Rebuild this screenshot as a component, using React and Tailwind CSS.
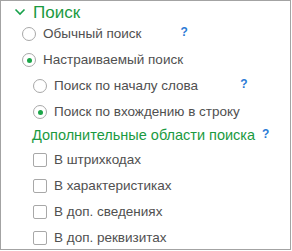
import React, { useState } from "react";

const Help = ({ className = "" }) => (
  <span className={`text-[#2b7bd6] text-[12px] font-bold leading-none ${className}`}>?</span>
);

const Radio = ({ checked }) => (
  <span className="w-[14px] h-[14px] rounded-full border border-[#a8a8a8] bg-white flex items-center justify-center shrink-0">
    {checked && <span className="w-[5px] h-[5px] rounded-full bg-[#1ba548]" />}
  </span>
);

const Box = () => (
  <span className="w-[14px] h-[14px] rounded-[2px] border border-[#a8a8a8] bg-white shrink-0" />
);

const App = () => {
  const [mode, setMode] = useState("custom");
  const [sub, setSub] = useState("contains");

  return (
    <div
      className="w-[291px] h-[250px] border border-[#a3a3a3] bg-white text-[#505050] text-[13.5px]"
      style={{ fontFamily: '"Liberation Sans", Arial, sans-serif' }}
    >
      <div className="flex items-center h-[20px] pl-[13px] pt-[2px]">
        <svg width="12" height="8" viewBox="0 0 12 8" className="mr-[7px]">
          <path d="M1.5 1.5 L6 6 L10.5 1.5" fill="none" stroke="#17a14a" strokeWidth="1.6" />
        </svg>
        <span className="text-[#1b9a3f] text-[17px] leading-none">Поиск</span>
      </div>

      <div className="flex flex-col">
        <div className="flex items-center h-[26px] pl-[21px]" onClick={() => setMode("simple")}>
          <Radio checked={mode === "simple"} />
          <span className="ml-[7px]">Обычный поиск</span>
          <Help className="ml-[39px] -mt-[4px]" />
        </div>
        <div className="flex items-center h-[26px] pl-[21px]" onClick={() => setMode("custom")}>
          <Radio checked={mode === "custom"} />
          <span className="ml-[7px]">Настраиваемый поиск</span>
        </div>
        <div className="flex items-center h-[26px] pl-[32px]" onClick={() => setSub("start")}>
          <Radio checked={sub === "start"} />
          <span className="ml-[7px]">Поиск по началу слова</span>
          <Help className="ml-[42px] -mt-[4px]" />
        </div>
        <div className="flex items-center h-[26px] pl-[32px]" onClick={() => setSub("contains")}>
          <Radio checked={sub === "contains"} />
          <span className="ml-[7px]">Поиск по вхождению в строку</span>
        </div>
        <div className="flex items-center h-[22px] pl-[31px]">
          <span className="text-[#1b9a3f] text-[14.5px]">Дополнительные области поиска</span>
          <Help className="ml-[7px] -mt-[4px]" />
        </div>
        {["В штрихкодах", "В характеристиках", "В доп. сведениях", "В доп. реквизитах"].map((t) => (
          <div key={t} className="flex items-center h-[26px] pl-[32px]">
            <Box />
            <span className="ml-[7px]">{t}</span>
          </div>
        ))}
      </div>
    </div>
  );
};

export default App;
